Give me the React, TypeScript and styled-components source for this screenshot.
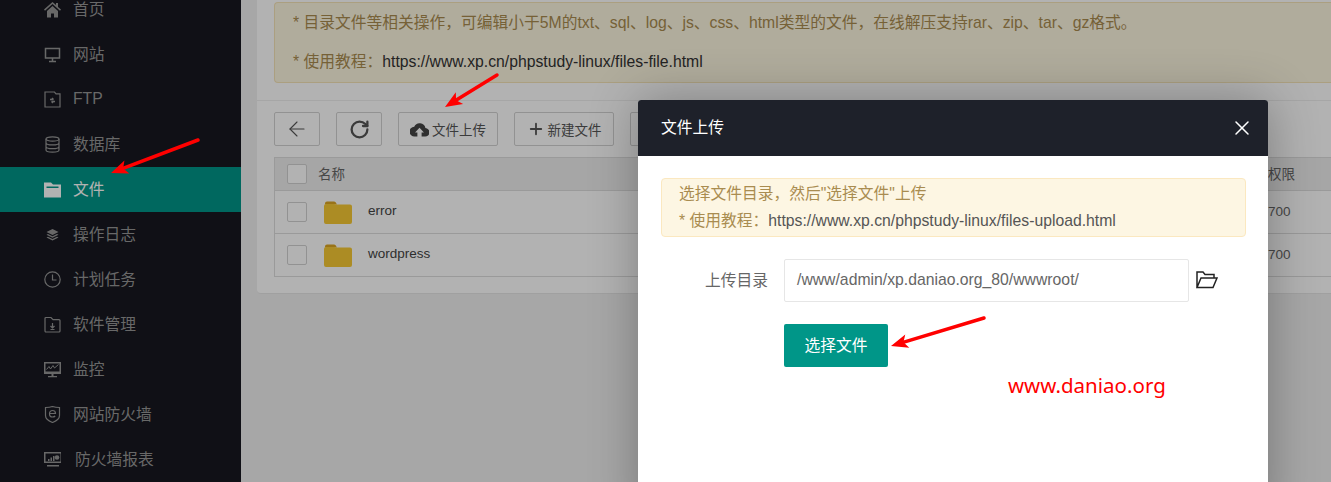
import React from 'react';
import styled, { createGlobalStyle } from 'styled-components';
import { ArrowLeft, Plus, RotateCw, X } from 'lucide-react';

const CJK = `"Liberation Sans", "Noto Sans CJK SC", sans-serif`;

const GlobalStyle = createGlobalStyle`
  html, body {
    margin: 0;
    height: 100%;
    overflow: hidden;
    background: #f0f0f0;
    font-family: ${CJK};
  }
`;

const Page = styled.div`
  position: relative;
  display: flex;
  width: 1331px;
  height: 482px;
  overflow: hidden;
`;

const Sidebar = styled.aside`
  flex: 0 0 241px;
  background: #171820;
`;

const Menu = styled.ul`
  list-style: none;
  margin: -13px 0 0;
  padding: 0;
`;

const MenuItem = styled.li<{ $active?: boolean; $gap?: number }>`
  display: flex;
  align-items: center;
  gap: ${(p) => p.$gap ?? 12}px;
  height: 45px;
  padding-left: 44px;
  font-size: 15.75px;
  color: ${(p) => (p.$active ? '#fff' : '#969696')};
  background: ${(p) => (p.$active ? '#009688' : 'transparent')};
`;

const MenuLabel = styled.span`
  margin-bottom: 2px;
`;

const MenuIcon = styled.svg`
  flex: 0 0 17px;
  width: 17px;
  height: 17px;
  fill: none;
  stroke: currentColor;
  stroke-width: 1.2;
`;

const Main = styled.main`
  flex: 1;
  min-width: 0;
  padding: 0 0 0 16px;
`;

const Card = styled.section`
  margin-top: -14px;
  height: 308px;
  background: #fff;
  border-radius: 4px 0 0 4px;
  border-bottom: 1px solid #e6e6e6;
  box-sizing: border-box;
`;

const NoticeWrap = styled.div`
  padding: 16px 0 0 17px;
  height: 115px;
  box-sizing: border-box;
  border-bottom: 1px solid #eee;
`;

const Notice = styled.div`
  height: 81px;
  box-sizing: border-box;
  padding: 9px 0 0 18px;
  background: #fdf6e0;
  border: 1px solid #f5e4b8;
  border-right: none;
  border-radius: 4px 0 0 4px;
  font-size: 15.75px;
  line-height: 21px;
  color: #a98c50;
`;

const NoticeLine = styled.p`
  margin: 0 0 18px;
  white-space: nowrap;
`;

const Link = styled.span`
  color: #333;
`;

const TipLink = styled.span`
  color: #555;
`;

const Toolbar = styled.div`
  display: flex;
  gap: 16px;
  padding: 11px 0 0 17px;
  height: 45px;
`;

const ToolButton = styled.button<{ $w: number }>`
  display: flex;
  align-items: center;
  justify-content: center;
  gap: 3px;
  flex: 0 0 ${(p) => p.$w}px;
  width: ${(p) => p.$w}px;
  height: 34px;
  padding: 0;
  background: #fff;
  border: 1px solid #d2d2d2;
  border-radius: 2px;
  font: 13.5px ${CJK};
  color: #555;
`;

const Table = styled.div`
  margin-left: 17px;
  border-top: 1px solid #ddd;
  border-bottom: 1px solid #ddd;
  border-left: 1px solid #ddd;
`;

const HeadRow = styled.div`
  display: flex;
  align-items: center;
  height: 32px;
  background: #eee;
  border-bottom: 1px solid #ddd;
  font-size: 13.5px;
  color: #666;
`;

const Row = styled.div`
  display: flex;
  align-items: center;
  height: 42px;
  border-bottom: 1px solid #ddd;
  font-size: 13.5px;
  color: #444;
  &:last-child {
    border-bottom: none;
  }
`;

const Check = styled.span`
  flex: 0 0 18px;
  width: 18px;
  height: 18px;
  margin-left: 12px;
  border: 1px solid #d2d2d2;
  border-radius: 2px;
  background: #fff;
`;

const HeadName = styled.span`
  margin: 0 0 3px 11px;
`;

const FileName = styled.span`
  margin: 0 0 4px 16px;
`;

const FolderIcon = styled.svg`
  flex: 0 0 28px;
  width: 28px;
  height: 23px;
  margin-left: 17px;
`;

const Perm = styled.span`
  margin: 0 0 2px auto;
  width: 63px;
  color: #666;
`;

const Overlay = styled.div`
  position: absolute;
  inset: 0;
  background: rgba(0, 0, 0, 0.3);
`;

const Modal = styled.div`
  position: absolute;
  left: 638px;
  top: 100px;
  width: 630px;
  height: 420px;
  background: #fff;
  border-radius: 3px 3px 0 0;
  box-shadow: 1px 1px 50px rgba(0, 0, 0, 0.3);
`;

const ModalHead = styled.header`
  display: flex;
  align-items: center;
  justify-content: space-between;
  height: 56px;
  padding: 0 14px 0 23px;
  background: #1e212a;
  border-radius: 3px 3px 0 0;
  color: #fff;
  font-size: 15.75px;
`;

const ModalTitle = styled.span`
  margin-bottom: 3px;
`;

const ModalBody = styled.div`
  padding: 22px 22px 0 23px;
`;

const Tip = styled.div`
  height: 59px;
  box-sizing: border-box;
  padding: 1px 0 0 17px;
  background: #fdf6e3;
  border: 1px solid #fbe8c0;
  border-radius: 4px;
  font-size: 15.75px;
  line-height: 27px;
  color: #a98c50;
`;

const FormRow = styled.div`
  display: flex;
  align-items: center;
  margin-top: 22px;
`;

const Label = styled.label`
  width: 107px;
  margin: 0 16px 3px 0;
  text-align: right;
  font-size: 15.75px;
  color: #666;
`;

const PathBox = styled.div`
  display: flex;
  align-items: center;
  width: 405px;
  height: 43px;
  box-sizing: border-box;
  padding: 0 0 2px 12px;
  border: 1px solid #e6e6e6;
  border-radius: 2px;
  font-size: 15.75px;
  color: #666;
`;

const OpenIcon = styled.svg`
  width: 22px;
  height: 19px;
  margin: 0 0 3px 7px;
`;

const PickButton = styled.button`
  display: block;
  width: 104px;
  height: 43px;
  margin: 22px 0 0 123px;
  padding: 0 0 3px;
  background: #009688;
  border: none;
  border-radius: 2px;
  color: #fff;
  font: 15.75px ${CJK};
`;

const Drawing = styled.svg`
  position: absolute;
  left: 0;
  top: 0;
  width: 1331px;
  height: 482px;
  pointer-events: none;
`;

const Watermark = styled.div`
  position: absolute;
  left: 1008px;
  top: 372px;
  font-family: "Noto Sans", sans-serif;
  font-size: 20.5px;
  line-height: 26px;
  color: #ff0000;
`;

const CloudIcon = () => (
  <svg width="19" height="15" viewBox="0 0 18 14">
    <path
      fill="#444"
      d="M14.6 5.6A5.6 5.6 0 0 0 4 4.4 4.6 4.6 0 0 0 4.4 13.6h2.6V9.8H4.8L9 5.4l4.2 4.4H11v3.8h3.2a4 4 0 0 0 .4-8z"
    />
  </svg>
);

const FolderYellow = () => (
  <FolderIcon viewBox="0 0 28 23">
    <path fill="#dca523" d="M1 2.5A2 2 0 0 1 3 .5h7a2 2 0 0 1 1.6.8L13 3.5H1z" />
    <path
      fill="#f7c934"
      d="M0 5a2 2 0 0 1 2-2l8 .1 1.5 0.4H26a2 2 0 0 1 2 2V21a2 2 0 0 1-2 2H2a2 2 0 0 1-2-2z"
    />
  </FolderIcon>
);

const items: { label: string; gap?: number; active?: boolean; icon: React.ReactNode }[] = [
  {
    label: '首页',
    icon: <path fill="currentColor" stroke="none" d="M8.5 1 0 8.6l1 1.1L8.5 3l7.5 6.7 1-1.1-3-2.7V2h-2v2.100zM3 10v6.500h4v-4h3v4h4V10L8.500 5z" />
  },
  {
    label: '网站',
    icon: <path d="M1.500 2.500h14v9.500h-14zM8.500 12v3M5 15.500h7" strokeWidth="1.500" />
  },
  {
    label: 'FTP',
    icon: (
      <>
        <path d="M1 1h9.500l1.500 1.800h4V16H1z" />
        <path d="M6 8.500h3.500M9.500 8.500 8 7M11 10.500H7.500M7.500 10.500 9 12" strokeWidth="1.400" />
      </>
    )
  },
  {
    label: '数据库',
    icon: (
      <>
        <ellipse cx="8.500" cy="3" rx="6.500" ry="2.200" />
        <path d="M2 3v11c0 1.300 3 2.200 6.500 2.200S15 15.300 15 14V3M2 6.700c0 1.300 3 2.200 6.500 2.200S15 8 15 6.700M2 10.400c0 1.300 3 2.200 6.500 2.200s6.500-.9 6.500-2.200" />
      </>
    )
  },
  {
    label: '文件',
    active: true,
    icon: <path fill="currentColor" stroke="none" fillRule="evenodd" d="M0 1.500h7L9 3.500h8v13H0zM2.500 5.500v1.500h12V5.500z" />
  },
  {
    label: '操作日志',
    icon: (
      <path
        fill="currentColor"
        stroke="none"
        d="M8.500 3 14.500 6l-6 3-6-3zM4 8l4.500 2.300L13 8l1.500.8-6 3-6-3zM4 10.800l4.500 2.300 4.500-2.300 1.500.8-6 3-6-3z"
      />
    )
  },
  {
    label: '计划任务',
    icon: (
      <>
        <circle cx="8.500" cy="8.500" r="7.700" />
        <path d="M8.500 3.500v5.500h4" />
      </>
    )
  },
  {
    label: '软件管理',
    icon: <path d="M1 2.500a1 1 0 0 1 1-1h5l2 2.200h6a1 1 0 0 1 1 1V15a1 1 0 0 1-1 1H2a1 1 0 0 1-1-1zM8.500 7v5M6.500 10l2 2 2-2M6.500 13.500h4" />
  },
  {
    label: '监控',
    icon: (
      <>
        <path fill="currentColor" stroke="none" fillRule="evenodd" d="M0 1h17v12H0zM1.500 2.500v8h14v-8zM7.500 13h2v2h-2zM4 15h9v1.200H4z" />
        <path d="M2.500 8.500 5 5.500 6.500 8 9 4.500 10.500 7l4-3.500" strokeWidth="1" />
      </>
    )
  },
  {
    label: '网站防火墙',
    icon: (
      <>
        <path d="M1.500 1.500c2.500 0 5-.3 7-1 2 .7 4.500 1 7 1v8c0 3-3 5.500-7 7-4-1.500-7-4-7-7z" />
        <path d="M5.500 7.500h6c0-2-1.200-3-3-3s-3 1.300-3 3.200 1.200 3.300 3 3.300c1 0 2-.3 2.700-1" />
      </>
    )
  },
  {
    label: '防火墙报表',
    gap: 14,
    icon: (
      <>
        <path fill="currentColor" stroke="none" fillRule="evenodd" d="M0 1h18v11H0zM1.500 2.500v8h15v-8zM3 14h12v1.500H3z" />
        <path fill="currentColor" stroke="none" d="M4 8h1.500v2H4zM6.500 6.500H8V10H6.500zM9 5h1.500v5H9z" />
        <circle cx="13" cy="6.500" r="2.300" fill="currentColor" stroke="none" />
      </>
    )
  }
];

const Arrow = ({ from, tip }: { from: [number, number]; tip: [number, number] }) => {
  // shaft plus a barbed head, pointing from the tail to the tip
  const [fx, fy] = from;
  const [tx, ty] = tip;
  const len = Math.hypot(fx - tx, fy - ty);
  const ux = (fx - tx) / len;
  const uy = (fy - ty) / len;
  const px = -uy;
  const py = ux;
  const at = (a: number, b: number) => `${tx + ux * a + px * b},${ty + uy * a + py * b}`;
  return (
    <g>
      <line x1={fx} y1={fy} x2={tx + ux * 10} y2={ty + uy * 10} stroke="#f00" strokeWidth="3.5" strokeLinecap="round" />
      <polygon points={`${at(0, 0)} ${at(17, 7)} ${at(13, 0)} ${at(17, -7)}`} fill="#f00" />
    </g>
  );
};

const App: React.FC = () => {
  return (
    <Page>
      <GlobalStyle />
      <Sidebar>
        <Menu>
          {items.map((item) => (
            <MenuItem $active={item.active} $gap={item.gap} key={item.label}>
              <MenuIcon viewBox="0 0 17 17">{item.icon}</MenuIcon>
              <MenuLabel>{item.label}</MenuLabel>
            </MenuItem>
          ))}
        </Menu>
      </Sidebar>
      <Main>
        <Card>
          <NoticeWrap>
            <Notice>
              <NoticeLine>
                * 目录文件等相关操作，可编辑小于5M的txt、sql、log、js、css、html类型的文件，在线解压支持rar、zip、tar、gz格式。
              </NoticeLine>
              <NoticeLine>
                * 使用教程：<Link>https://www.xp.cn/phpstudy-linux/files-file.html</Link>
              </NoticeLine>
            </Notice>
          </NoticeWrap>
          <Toolbar>
            <ToolButton $w={46}>
              <ArrowLeft size={24} strokeWidth={1.1} />
            </ToolButton>
            <ToolButton $w={46}>
              <RotateCw size={21} strokeWidth={2.6} />
            </ToolButton>
            <ToolButton $w={100}>
              <CloudIcon />
              文件上传
            </ToolButton>
            <ToolButton $w={100}>
              <Plus size={18} strokeWidth={2.4} />
              新建文件
            </ToolButton>
            <ToolButton $w={100} />
          </Toolbar>
          <Table>
            <HeadRow>
              <Check />
              <HeadName>名称</HeadName>
              <Perm>权限</Perm>
            </HeadRow>
            <Row>
              <Check />
              <FolderYellow />
              <FileName>error</FileName>
              <Perm>700</Perm>
            </Row>
            <Row>
              <Check />
              <FolderYellow />
              <FileName>wordpress</FileName>
              <Perm>700</Perm>
            </Row>
          </Table>
        </Card>
      </Main>
      <Overlay />
      <Modal>
        <ModalHead>
          <ModalTitle>文件上传</ModalTitle>
          <X size={24} strokeWidth={1.5} />
        </ModalHead>
        <ModalBody>
          <Tip>
            选择文件目录，然后"选择文件"上传
            <br />* 使用教程：<TipLink>https://www.xp.cn/phpstudy-linux/files-upload.html</TipLink>
          </Tip>
          <FormRow>
            <Label>上传目录</Label>
            <PathBox>/www/admin/xp.daniao.org_80/wwwroot/</PathBox>
            <OpenIcon viewBox="0 0 22 19">
              <path
                fill="none"
                stroke="#222"
                strokeWidth="1.500"
                d="M1 17.500V2h6l2 2.500h9V8M1 17.500 5 8h16l-4 9.500z"
              />
            </OpenIcon>
          </FormRow>
          <PickButton>选择文件</PickButton>
        </ModalBody>
      </Modal>
      <Drawing viewBox="0 0 1331 482">
        <Arrow from={[198, 140]} tip={[111, 173]} />
        <Arrow from={[497, 75]} tip={[445, 107]} />
        <Arrow from={[984, 318]} tip={[891, 346]} />
      </Drawing>
      <Watermark>www.daniao.org</Watermark>
    </Page>
  );
};

export default App;
